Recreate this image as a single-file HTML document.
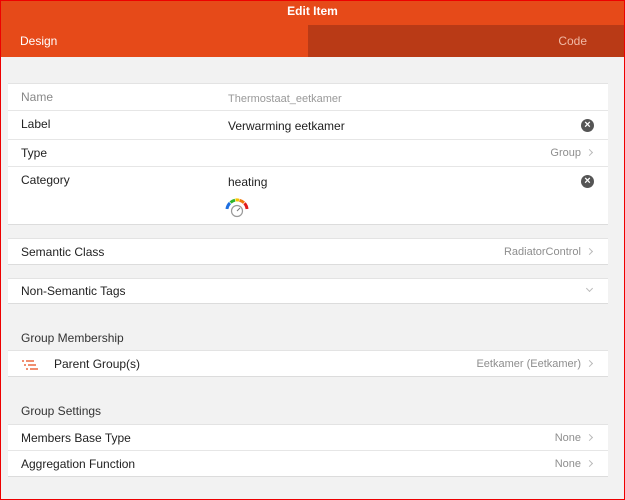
<!DOCTYPE html>
<html><head><style>
*{margin:0;padding:0;box-sizing:border-box}
body{width:625px;height:500px;overflow:hidden;background:#f2f2f2;font-family:"Liberation Sans",sans-serif;font-size:12px;color:#222;position:relative}
.frame{position:absolute;left:0;top:0;width:625px;height:500px;border:1px solid #e00;pointer-events:none;z-index:10}
.hdr{position:absolute;left:0;top:0;width:625px;height:25px;background:#e64a19;color:#fff;text-align:center;font-weight:bold;line-height:22px;font-size:12px}
.tab1{position:absolute;left:0;top:25px;width:308px;height:32px;background:#e64a19;color:#fff;line-height:33px;padding-left:20px;font-size:12px}
.tab2{position:absolute;left:308px;top:25px;width:317px;height:32px;background:#b93a16;color:#f0b9a5;line-height:33px;text-align:right;padding-right:38px;font-size:12px}
.card{position:absolute;left:8px;width:600px;background:#fff;border-top:1px solid #e3e3e3;border-bottom:1px solid #dcdcdc}
.row{position:relative;height:27px;border-bottom:1px solid #e6e6e6}
.row:last-child{border-bottom:none}
.l{position:absolute;left:13px;top:6px}
.v{position:absolute;left:220px;top:8px}
.r{position:absolute;right:27px;top:7px;color:#8e8e8e;font-size:11px}
.chev{position:absolute;right:16px;top:10px;width:5px;height:5px;border-right:1px solid #bbb;border-top:1px solid #bbb;transform:rotate(45deg)}
.x{position:absolute;right:14px;top:8px;width:13px;height:13px;border-radius:50%;background:#555;color:#fff;font-size:11px;line-height:13px;text-align:center;font-weight:bold}
.sec{position:absolute;left:21px;color:#333}
</style></head><body>
<div class="hdr">Edit Item</div>
<div class="tab1">Design</div>
<div class="tab2">Code</div>

<div class="card" style="top:83px">
 <div class="row" style="height:27px"><span class="l" style="color:#888">Name</span><span class="v" style="color:#999;font-size:11px;top:9px">Thermostaat_eetkamer</span></div>
 <div class="row" style="height:29px"><span class="l">Label</span><span class="v">Verwarming eetkamer</span><span class="x">×</span></div>
 <div class="row" style="height:27px"><span class="l">Type</span><span class="r">Group</span><span class="chev"></span></div>
 <div class="row" style="height:57px"><span class="l">Category</span><span class="v">heating</span><span class="x">×</span>
  <svg style="position:absolute;left:217px;top:31px" width="24" height="20" viewBox="0 0 24 20">
   <path d="M2 11 A10 10 0 0 1 5 5" stroke="#1e6fe0" stroke-width="3" fill="none"/>
   <path d="M5.5 4.5 A10 10 0 0 1 10 2.2" stroke="#2db52d" stroke-width="3" fill="none"/>
   <path d="M10.5 2 A10 10 0 0 1 14 2.2" stroke="#f5c400" stroke-width="3" fill="none"/>
   <path d="M14.5 2.3 A10 10 0 0 1 19 4.8" stroke="#f07a10" stroke-width="3" fill="none"/>
   <path d="M19.5 5.3 A10 10 0 0 1 22 11" stroke="#e21b1b" stroke-width="3" fill="none"/>
   <circle cx="12" cy="13" r="5.5" fill="#fff" stroke="#999" stroke-width="1.2"/>
   <path d="M12 13 L15 10" stroke="#777" stroke-width="1"/>
  </svg>
 </div>
</div>

<div class="card" style="top:238px"><div class="row" style="height:25px"><span class="l">Semantic Class</span><span class="r">RadiatorControl</span><span class="chev"></span></div></div>
<div class="card" style="top:278px"><div class="row" style="height:24px"><span class="l" style="top:5px">Non-Semantic Tags</span><span class="chev" style="transform:rotate(135deg);top:7px"></span></div></div>

<div class="sec" style="top:331px">Group Membership</div>
<div class="card" style="top:350px"><div class="row" style="height:25px">
 <svg style="position:absolute;left:14px;top:9px" width="16" height="10"><g stroke="#e64a19" stroke-width="1.2"><path d="M0 1h2M4 1h8M2 5h2M6 5h8M4 9h2M8 9h8"/></g></svg>
 <span class="l" style="left:46px">Parent Group(s)</span><span class="r">Eetkamer (Eetkamer)</span><span class="chev"></span></div></div>

<div class="sec" style="top:404px">Group Settings</div>
<div class="card" style="top:424px">
 <div class="row" style="height:26px"><span class="l">Members Base Type</span><span class="r">None</span><span class="chev"></span></div>
 <div class="row" style="height:25px"><span class="l">Aggregation Function</span><span class="r">None</span><span class="chev"></span></div>
</div>
<div class="frame"></div>
</body></html>
